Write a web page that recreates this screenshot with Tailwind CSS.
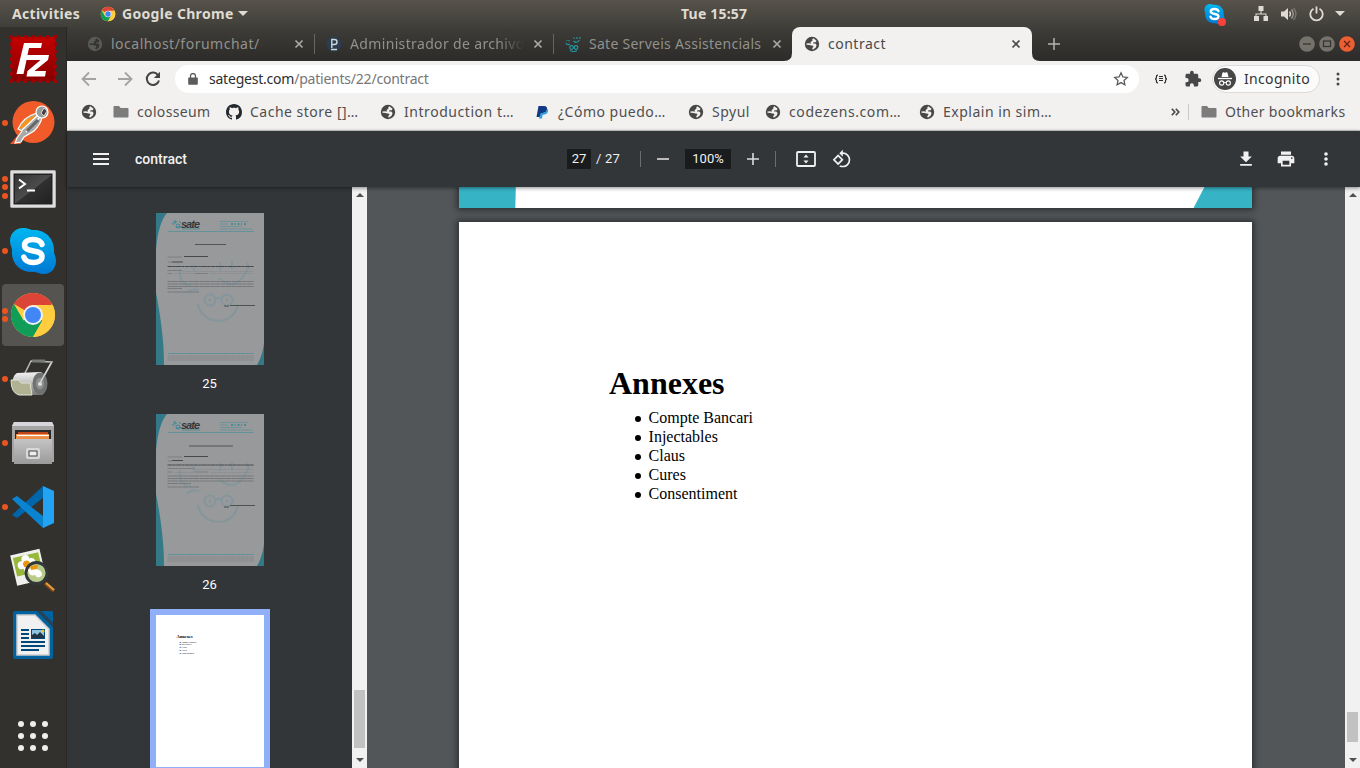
<!DOCTYPE html>
<html lang="en">
<head>
<meta charset="utf-8">
<title>contract</title>
<script src="https://cdn.jsdelivr.net/npm/@tailwindcss/browser@4"></script>
</head>
<body class="w-[1360px] h-[768px] overflow-hidden font-['Noto_Sans',sans-serif] text-[14px] whitespace-nowrap">
<svg class="absolute w-0 h-0">
  <defs>
    <linearGradient id="sk" x1="0" y1="0" x2="0" y2="1"><stop offset="0" stop-color="#00b7f0"/><stop offset="1" stop-color="#0078d4"/></linearGradient>
    <symbol id="globe" viewBox="0 0 16 16"><circle cx="8" cy="8" r="7.200" fill="#474747"/><path d="M9.300 2.300L12.600 4.800 11.700 6.200H9.500L9 7.400H11.300L12.600 9 11.800 11.500 9.200 13.500 8.300 13.300V12L9.300 11V9.800L7.200 9.600 5.800 8.900 2.500 8.800 2.400 7.400 5 7.300 6.800 7.800 6.600 6 8.400 4.800 8.300 3.200Z" fill="#f2f1f0"/></symbol>
    <symbol id="globe-dim" viewBox="0 0 16 16"><circle cx="8" cy="8" r="7.200" fill="#5a5a57"/><path d="M9.300 2.300L12.600 4.800 11.700 6.200H9.500L9 7.400H11.300L12.600 9 11.800 11.500 9.200 13.500 8.300 13.300V12L9.300 11V9.800L7.200 9.600 5.800 8.900 2.500 8.800 2.400 7.400 5 7.300 6.800 7.800 6.600 6 8.400 4.800 8.300 3.200Z" fill="#343431"/></symbol>
    <symbol id="close" viewBox="0 0 16 16"><path d="M4.500 4.500l7 7M11.500 4.500l-7 7" stroke="currentColor" stroke-width="1.700" fill="none"/></symbol>
    <symbol id="folder" viewBox="0 0 16 14"><path d="M1.500 1H6l1.700 2h6.800c.6 0 1 .4 1 1v7.500c0 .6-.4 1-1 1h-13c-.6 0-1-.4-1-1V2c0-.6.4-1 1-1z" fill="#7c7c7c"/></symbol>
    <symbol id="chrome" viewBox="0 0 48 48">
      <circle cx="24" cy="24" r="22" fill="#ffcd40"/>
      <path d="M24 24L4.950 13A22 22 0 0 1 43.050 13Z" fill="#db4437"/><path d="M24 13H43.050L24 24Z" fill="#db4437"/>
      <path d="M4.950 13A22 22 0 0 0 24 46L33.500 29.500 24 24 14.500 29.500Z" fill="#0f9d58"/>
      <path d="M43.050 13A22 22 0 0 1 24 46L33.500 29.500 24 24V14H43.500Z" fill="#ffcd40"/>
      <circle cx="24" cy="24" r="10" fill="#f1f1f1"/><circle cx="24" cy="24" r="8" fill="#4285f4"/>
    </symbol>
    <symbol id="skype" viewBox="0 0 48 48">
      <path d="M14 1C20 1 21 3 24 3C36 2 46 12 45 25C45 27 47 30 47 34C47 41 42 47 35 47C30 47 28 45 25 45C12 46 2 37 3 24C3 20 1 18 1 14C1 7 6 1 14 1Z" fill="url(#sk)"/>
      <path d="M33 17.500C31.500 13.500 28 12.500 24 12.500C19 12.500 15.500 14.500 15.500 18.300C15.500 26.500 33 21.500 33 29.500C33 33.500 29 35.500 24.500 35.500C19.500 35.500 16 33.800 14.800 30" stroke="#fff" stroke-width="5.500" stroke-linecap="round" fill="none"/>
    </symbol>
    <symbol id="thumb" viewBox="0 0 108 152">
      <path d="M0 0H108V152H0Z" fill="#98999b"/>
      <path d="M0 0H11C5 7 2 18 0 36Z" fill="#34798a"/><path d="M0 80C4 100 8 126 8 152H0Z" fill="#347a86"/><path d="M108 130C107 139 104 147 101 152H108Z" fill="#347a86"/>
      <g fill="none" stroke="#84969c" stroke-width="2"><circle cx="54" cy="87" r="5.500"/><circle cx="71" cy="87" r="5.500"/><path d="M59 86q3-2 7 0M42 91C46 113 78 114 82 91M31 79q9-5 12-1M24 56q-1 17 11 16M38 52v6M63 65q17 16 29-10M64 49v8M76 48v8M91 49l2 7"/></g>
      <circle cx="54" cy="87" r="1.500" fill="#84969c"/><circle cx="71" cy="87" r="1.500" fill="#84969c"/>
      <g fill="none" stroke="#398895" stroke-width="1"><circle cx="22" cy="13" r="2"/><circle cx="19" cy="9" r="1.200"/><path d="M16 10l2 2M23 8l2 2M20 14h5"/></g>
      <text x="25" y="14.500" font-family="Liberation Sans" font-size="11" font-style="italic" font-weight="bold" fill="#34383b" textLength="19">sate</text>
      <path d="M26 16H44" stroke="#478b95" stroke-width=".8"/>
      <path d="M64 8.500H92M64 11H72M64 13.500H86M64 16H97" stroke="#5f929b" stroke-width=".8" stroke-dasharray="7 .4 3 .4"/><path d="M75 11H91" stroke="#2f8593" stroke-width="1.300" stroke-dasharray="2 1.500 1 2"/>
      <path d="M12 18.500H98M12 140.500H98" stroke="#5c919a" stroke-width=".9"/>
      <path d="M11.500 143H98M11.500 145H98M11.500 147H98" stroke="#818487" stroke-width=".8" stroke-dasharray="3 .3 5 .4"/>
    </symbol>
  </defs>
</svg>

<div class="flex flex-col w-full h-full">
  <!-- Desktop top bar -->
  <header class="flex items-center h-[27px] shrink-0 bg-linear-to-b from-[#57534b] to-[#403f3a] text-[#dfdbd2] font-bold">
    <span class="ml-3 w-[88px] tracking-[.3px]">Activities</span>
    <svg class="w-4 h-4 mr-[6px]"><use href="#chrome"/></svg>
    <span class="w-[111px] tracking-[.32px]">Google Chrome</span>
    <svg class="ml-[5px] w-[10px] h-[5px]" viewBox="0 0 10 5"><path d="M0 0H10L5 5Z" fill="#dfdbd2"/></svg>
    <span class="ml-[433px] w-[66px] pb-px tracking-[.2px]">Tue 15:57</span>
    <div class="ml-auto flex items-center pr-[15px]">
      <div class="relative mr-[28px] w-[22px] h-[22px]"><svg class="w-[21px] h-[22px]" viewBox="0 0 48 48"><use href="#skype"/></svg><span class="absolute right-0 -bottom-px w-2 h-2 rounded-full bg-[#f9403a]"></span></div>
      <svg class="w-[14px] h-[15px] mr-[13px]" viewBox="0 0 14 15"><path d="M4.500 0h5v5h-5zM0 10h5v5H0zM9.500 10h4.500v5H9.500zM6.500 5h1v2.500h5V10h-1V8.500h-9V10h-1V7.500h5z" fill="#dfdbd2"/></svg>
      <svg class="w-[16px] h-[14px] mr-[12px]" viewBox="0 0 16 14"><path d="M0 4.500h3L7 1v12L3 9.500H0z" fill="#dfdbd2"/><path d="M8.500 4.500q2 2.500 0 5" stroke="#dfdbd2" stroke-width="1.300" fill="none"/><path d="M10.500 2.500q3.500 4.500 0 9" stroke="#a5a29b" stroke-width="1.300" fill="none"/><path d="M12.500 1q5 6 0 12" stroke="#7d7a73" stroke-width="1.300" fill="none"/></svg>
      <svg class="w-[15px] h-[16px] mr-[11px]" viewBox="0 0 15 16"><path d="M4.500 2.800a6.200 6.200 0 1 0 6 0M7.500 0.500v7" stroke="#dfdbd2" stroke-width="1.800" fill="none"/></svg>
      <svg class="w-[10px] h-[5px]" viewBox="0 0 10 5"><path d="M0 0H10L5 5Z" fill="#dfdbd2"/></svg>
    </div>
  </header>

  <div class="flex flex-1 min-h-0">
    <!-- Dock -->
    <nav class="flex flex-col w-[67px] shrink-0 bg-[#33312d] border-r border-[#2a2826]">
      <div class="flex items-center h-16"><span class="w-[9px]"></span>
        <svg class="w-12 h-12" viewBox="0 0 48 48"><linearGradient id="fz" x1="0" y1="0" x2="0" y2="1"><stop offset="0" stop-color="#c40000"/><stop offset="1" stop-color="#860000"/></linearGradient><path d="M2 2H46V46H2Z" fill="url(#fz)"/><path d="M2 2H46V46H2Z" fill="none" stroke="#a80000" stroke-width="4" stroke-linecap="round" stroke-dasharray="0.100 7.230"/><path d="M15 8H33L32 13H20L18.500 20H27L26 25H17.500L14.500 39H7.500ZM23 20H40L39 25 25.500 36H37L36 41.500H17.500L18.500 36 31.500 25H22Z" fill="#fff"/></svg>
      </div>
      <div class="flex items-center h-16"><span class="ml-[2px] mr-[2px] w-[6px] h-[6px] rounded-full bg-[#e95420]"></span>
        <svg class="w-[46px] h-[46px]" viewBox="0 0 46 46"><circle cx="23.500" cy="22" r="21" fill="#f15a29"/><path d="M0 44L8 35 11 44Z" fill="#e8512b"/><path d="M27 13Q13 17 8 29L12 31 7 38 5 43 11 42 14 37 24 31Q31 24 32 17Z" fill="#a9a9a7" stroke="#fff" stroke-width="1.200"/><path d="M26 15Q14 18 9 29L15 28Z" fill="#f7931e"/><path d="M30 17L16 32M28 15L12 30" stroke="#fff" stroke-width="1.200"/><path d="M28 20L17 31" stroke="#666" stroke-width="3"/><circle cx="32" cy="12" r="6" fill="#9b9b9a" stroke="#fff" stroke-width="1.200"/><path d="M34 8l3 3-3 5-3-3z" fill="#444" stroke="#fff" stroke-width=".7"/></svg>
      </div>
      <div class="flex items-center h-16"><span class="ml-[2px] mr-[2px] flex flex-col gap-[2.500px]"><i class="w-[6px] h-[6px] rounded-full bg-[#e95420]"></i><i class="w-[6px] h-[6px] rounded-full bg-[#e95420]"></i><i class="w-[6px] h-[6px] rounded-full bg-[#e95420]"></i></span>
        <svg class="w-[46px] h-[38px] mt-1" viewBox="0 0 46 38"><linearGradient id="tm" x1="0" y1="0" x2="1" y2="1"><stop offset="0" stop-color="#343434"/><stop offset=".5" stop-color="#4c4c4c"/><stop offset=".52" stop-color="#303030"/><stop offset="1" stop-color="#222"/></linearGradient><rect x=".5" y=".5" width="45" height="37" rx="1" fill="#dedede" stroke="#b0b0b0"/><rect x="3.500" y="3.500" width="39" height="31" fill="#222"/><rect x="5" y="5" width="36" height="28" fill="url(#tm)"/><path d="M9 9.500l6 4.500-6 4.500M17 20.500h8" stroke="#fff" stroke-width="2" fill="none"/></svg>
      </div>
      <div class="flex items-center h-16"><span class="ml-[2px] mr-[1px] w-[6px] h-[6px] rounded-full bg-[#e95420]"></span><svg class="w-12 h-12"><use href="#skype"/></svg></div>
      <div class="flex items-center h-16"><div class="flex items-center mx-[2px] w-[62px] h-[62px] rounded-[4px] bg-[#565450]"><span class="mr-[1px] flex flex-col gap-[2.500px]"><i class="w-[6px] h-[6px] rounded-full bg-[#e95420]"></i><i class="w-[6px] h-[6px] rounded-full bg-[#e95420]"></i></span><svg class="w-12 h-12"><use href="#chrome"/></svg></div></div>
      <div class="flex items-center h-16"><span class="ml-[2px] mr-[1px] w-[6px] h-[6px] rounded-full bg-[#e95420]"></span>
        <svg class="w-12 h-12" viewBox="0 0 48 48"><linearGradient id="rl" x1="0" y1="0" x2="0" y2="1"><stop offset="0" stop-color="#f2f2f2"/><stop offset=".35" stop-color="#cfcfcf"/><stop offset="1" stop-color="#777"/></linearGradient><path d="M15 20L22 6 43 7 33 25" fill="none" stroke="#b9bbb8" stroke-width="1.500"/><path d="M23 6h13" stroke="#777b77" stroke-width="3"/><path d="M8 18L31 17C38 18 41 35 33 40L10 40C1 36 2 21 8 18Z" fill="url(#rl)"/><ellipse cx="31" cy="28.500" rx="7.500" ry="11" fill="#6f7270"/><ellipse cx="31" cy="28.500" rx="4" ry="6" fill="#8d908e"/><circle cx="31" cy="29" r="2" fill="#ddd"/><path d="M31 28L42 8" stroke="#d5d5d5" stroke-width="1.500"/><path d="M2 25H10L12 28H21L23 40H10Q2 38 2 25Z" fill="#b0b293" stroke="#e2e3d2"/></svg>
      </div>
      <div class="flex items-center h-16"><span class="ml-[2px] mr-[3px] w-[6px] h-[6px] rounded-full bg-[#e95420]"></span>
        <svg class="w-[44px] h-[46px] -mt-px" viewBox="0 0 44 46"><linearGradient id="fl" x1="0" y1="0" x2="0" y2="1"><stop offset="0" stop-color="#c4c4c4"/><stop offset="1" stop-color="#9a9a9a"/></linearGradient><path d="M3 2H41L43 6V42H1V6Z" fill="#a5a5a5"/><path d="M3 2H41L43 6H1Z" fill="#d9d5dc"/><path d="M4 10H40V22H4Z" fill="#2b2b2b"/><path d="M7 12H37V21H7Z" fill="#c2461a"/><path d="M5 14H38V22H5Z" fill="#ee8d45"/><path d="M6 15.500H38" stroke="#fff" stroke-width="1.200"/><path d="M3 19H41V44H3Z" fill="url(#fl)"/><rect x="15" y="28" width="14" height="11" rx="2" fill="#d8d8d8"/><rect x="18" y="31" width="8" height="5" fill="#eee" stroke="#444"/></svg>
      </div>
      <div class="flex items-center h-16"><span class="ml-[2px] mr-[4px] w-[6px] h-[6px] rounded-full bg-[#e95420]"></span>
        <svg class="w-[42px] h-[42px]" viewBox="0 0 42 42"><path d="M0 29L31 0V12L5 32Z" fill="#0065a9"/><path d="M0 13L5 10 31 30V42Z" fill="#0a84d0"/><path d="M31 0L42 5V37L31 42Z" fill="#22a3f3"/></svg>
      </div>
      <div class="flex items-center h-16"><svg class="ml-[10px] w-[46px] h-[46px]" viewBox="0 0 46 46"><g transform="rotate(-13 17 18)"><rect x="3" y="4" width="30" height="31" fill="#f0f0ec"/><rect x="5" y="7" width="26" height="19" fill="#98b83c"/><g fill="#fff"><circle cx="12" cy="16" r="4"/><circle cx="22" cy="15" r="4"/><circle cx="17" cy="11" r="4"/><circle cx="17" cy="21" r="4"/></g><circle cx="17" cy="16" r="3.500" fill="#e8960e"/></g><circle cx="26.500" cy="25" r="10.500" fill="#b9cc8b" stroke="#33373a" stroke-width="2.800"/><path d="M18 22q4-4 8-1 6 1 6 6-4 5-7 0-6 2-7-5z" fill="#fff"/><path d="M20 18l8-1-1 4-6 1z" fill="#e8960e"/><path d="M35 35L44 43" stroke="#774815" stroke-width="4"/><path d="M36 35L44 42" stroke="#e79b4b" stroke-width="2"/></svg></div>
      <div class="flex items-center h-16"><svg class="ml-[13px] w-[40px] h-[48px]" viewBox="0 0 40 48"><path d="M2 0H24L40 16V46Q40 48 38 48H2Q0 48 0 46V2Q0 0 2 0Z" fill="#00629f"/><path d="M28 0H39Q40 0 40 1V12Z" fill="#00629f"/><path d="M24 0L40 16V12L28 0Z" fill="#25445a"/><path d="M4 4H22L36 18V44H4Z" fill="#f1f1f1" stroke="#ccc" stroke-width="1.500"/><path d="M8 19h8M8 23h8M8 27h8M8 31h24M8 35h24M8 39h18" stroke="#00487a" stroke-width="2"/><rect x="18" y="18" width="14" height="10" fill="#00487a"/><rect x="19" y="19" width="12" height="8" fill="#8dc4e2"/><path d="M19 27V24l3-2 2 2 3-3 4 4v2z" fill="#234"/><circle cx="30" cy="20" r="1.500" fill="#f3c93b"/></svg></div>
      <svg class="mt-auto mb-4 ml-[17px] w-8 h-8" viewBox="0 0 32 32" fill="#eeeeec"><circle cx="4" cy="4" r="3"/><circle cx="16" cy="4" r="3"/><circle cx="28" cy="4" r="3"/><circle cx="4" cy="16" r="3"/><circle cx="16" cy="16" r="3"/><circle cx="28" cy="16" r="3"/><circle cx="4" cy="28" r="3"/><circle cx="16" cy="28" r="3"/><circle cx="28" cy="28" r="3"/></svg>
    </nav>

    <!-- Browser window -->
    <main class="flex flex-col flex-1 min-w-0">
      <div class="flex h-[34px] shrink-0 pl-[9px] bg-linear-to-b from-[#3e3d39] to-[#2c2b29] text-[#92918d]">
        <div class="flex items-center w-[239px] pl-[11px] pr-[8px]"><svg class="w-4 h-4 mr-2"><use href="#globe-dim"/></svg><span class="pb-px tracking-[.5px]">localhost/forumchat/</span><svg class="w-4 h-4 ml-auto text-[#aaa9a5]"><use href="#close"/></svg></div>
        <div class="flex items-center w-[239px] pr-[8px]"><span class="w-px h-5 bg-[#666562] mr-[11px] -ml-px"></span><svg class="w-4 h-4 mr-2" viewBox="0 0 16 16"><circle cx="8" cy="8" r="7.500" fill="#2c3d50"/><path d="M5.800 12V3.500H8.500Q11 3.500 11 6T8.500 8.500H6M5 13.500h6" fill="none" stroke="#cfd6dc" stroke-width="1.400"/></svg><span class="w-[174px] pb-px tracking-[.35px] overflow-hidden mask-r-from-85%">Administrador de archivos</span><svg class="w-4 h-4 ml-auto text-[#aaa9a5]"><use href="#close"/></svg></div>
        <div class="flex items-center w-[239px] pr-[8px]"><span class="w-px h-5 bg-[#666562] mr-[11px] -ml-px"></span><svg class="w-4 h-4 mr-2" viewBox="0 0 16 16" fill="none" stroke="#2596a2" stroke-width="1.200"><circle cx="6.500" cy="11.500" r="1.800"/><circle cx="11" cy="11.500" r="1.800"/><path d="M5 14.500q3.500 2 7 0M8.500 5q3 3 6-1M9 1.500v1.500M12 1v2M15 1v2M1 7q1 2.500 4 1M1.500 4.500h1M4 4v1.500"/></svg><span class="pb-px tracking-[.27px]">Sate Serveis Assistencials</span><svg class="w-4 h-4 ml-auto text-[#aaa9a5]"><use href="#close"/></svg></div>
        <div class="relative flex items-center w-[240px] -ml-px pl-[12px] pr-[8px] rounded-t-[8px] bg-[#f2f1f0] text-[#4a4a4a]"><svg class="absolute -left-2 bottom-0 w-2 h-2" viewBox="0 0 8 8"><path d="M8 0V8H0Q8 8 8 0Z" fill="#f2f1f0"/></svg><svg class="absolute -right-2 bottom-0 w-2 h-2" viewBox="0 0 8 8"><path d="M0 0V8H8Q0 8 0 0Z" fill="#f2f1f0"/></svg><svg class="w-4 h-4 mr-2"><use href="#globe"/></svg><span class="pb-px tracking-[.5px]">contract</span><svg class="w-4 h-4 ml-auto text-[#4a4a4a]"><use href="#close"/></svg></div>
        <svg class="w-3 h-3 ml-[16px] mt-[11px]" viewBox="0 0 12 12"><path d="M6 0V12M0 6H12" stroke="#b5b4b0" stroke-width="1.500"/></svg>
        <div class="ml-auto flex items-center gap-1 pr-[5px]">
          <svg class="w-4 h-4" viewBox="0 0 16 16"><circle cx="8" cy="8" r="7.800" fill="#74726a"/><path d="M4 8h8" stroke="#33322e" stroke-width="1.200"/></svg>
          <svg class="w-4 h-4" viewBox="0 0 16 16"><circle cx="8" cy="8" r="7.800" fill="#74726a"/><rect x="4.500" y="5" width="7" height="5.500" fill="none" stroke="#33322e" stroke-width="1.200"/></svg>
          <svg class="w-4 h-4" viewBox="0 0 16 16"><circle cx="8" cy="8" r="7.800" fill="#ec5f32"/><path d="M5 5l6 6M11 5l-6 6" stroke="#5c2410" stroke-width="1.200"/></svg>
        </div>
      </div>

      <div class="flex items-center h-9 shrink-0 bg-[#f2f1f0] pl-[14px]">
        <svg class="w-4 h-4 mr-5" viewBox="0 0 16 16" fill="none" stroke="#a3a3a3" stroke-width="1.800"><path d="M15 8H2M8 1.500L1.500 8 8 14.500"/></svg>
        <svg class="w-4 h-4 mr-3" viewBox="0 0 16 16" fill="none" stroke="#a3a3a3" stroke-width="1.800"><path d="M1 8H14M8 1.500L14.500 8 8 14.500"/></svg>
        <svg class="w-4 h-4 mr-[14px]" viewBox="0 0 16 16"><path d="M13.300 4.500A6.200 6.200 0 1 0 14 9.500" fill="none" stroke="#454545" stroke-width="2"/><path d="M15 .8V7H8.800Z" fill="#454545"/></svg>
        <div class="flex items-center w-[964px] h-7 rounded-full bg-white pl-[13px] pr-[10px]">
          <svg class="w-[10px] h-3 mr-[11px]" viewBox="0 0 10 12"><path d="M1 4.500h8q.8 0 .8.800v5.700q0 .8-.8.800H1q-.8 0-.8-.8V5.300q0-.8.800-.8z" fill="#5c5c5c"/><path d="M2.500 5V3a2.500 2.500 0 0 1 5 0v2" fill="none" stroke="#5c5c5c" stroke-width="1.300"/></svg>
          <span class="pb-px tracking-[-.22px] text-[#767676]"><span class="text-[#2e2e2e]">sategest.com</span>/patients/22/contract</span>
          <svg class="w-4 h-4 ml-auto" viewBox="0 0 16 16"><path d="M8 1.800l1.900 4.100 4.400.5-3.300 3 .9 4.400L8 11.600l-3.900 2.200.9-4.400-3.300-3 4.400-.5z" fill="none" stroke="#5c5c5c" stroke-width="1.300"/></svg>
        </div>
        <svg class="w-[14px] h-[10px] ml-[15px]" viewBox="0 0 14 10" fill="none" stroke="#2b2b2b" stroke-width="1.200"><path d="M4 1.200Q2.500 1 2.500 2.500 2.500 5 1 5 2.500 5 2.500 7.500 2.500 9 4 8.800M10 1.200Q11.500 1 11.500 2.500 11.500 5 13 5 11.500 5 11.500 7.500 11.500 9 10 8.800"/><path d="M5 2.500H9M5 4.500H9M5 6.500H9" stroke-width="1"/></svg>
        <svg class="w-[18px] h-[18px] ml-[16px]" viewBox="0 0 24 24"><path d="M20.500 11H19V7c0-1.100-.9-2-2-2h-4V3.500a2.500 2.500 0 0 0-5 0V5H4c-1.100 0-2 .9-2 2v3.800h1.500a2.700 2.700 0 0 1 0 5.400H2V20c0 1.100.9 2 2 2h3.800v-1.500a2.700 2.700 0 0 1 5.400 0V22H17c1.100 0 2-.9 2-2v-4h1.500a2.500 2.500 0 0 0 0-5z" fill="#474747"/></svg>
        <div class="flex items-center w-[108px] h-7 ml-[10px] rounded-full bg-[#fbfbfb] border border-[#dcdbda] pl-px text-[#333]">
          <svg class="w-[22px] h-[22px] mr-[8px]" viewBox="0 0 22 22"><circle cx="11" cy="11" r="11" fill="#474747"/><path d="M7.500 9L8.500 4.800q.3-.8 1.100-.5L11 4.800l1.400-.5q.8-.3 1.100.5L14.500 9z" fill="#fff"/><path d="M4 10.500h14" stroke="#fff" stroke-width="1.300"/><circle cx="7.700" cy="15" r="2.100" fill="none" stroke="#fff" stroke-width="1.100"/><circle cx="14.300" cy="15" r="2.100" fill="none" stroke="#fff" stroke-width="1.100"/><path d="M9.800 14.700q1.200-.7 2.400 0" fill="none" stroke="#fff"/></svg>
          <span class="pb-px tracking-[.33px]">Incognito</span>
        </div>
        <svg class="w-1 h-4 ml-[16px]" viewBox="0 0 4 16" fill="#474747"><circle cx="2" cy="3" r="1.500"/><circle cx="2" cy="8" r="1.500"/><circle cx="2" cy="13" r="1.500"/></svg>
      </div>

      <div class="flex items-center h-[34px] shrink-0 bg-[#f2f1f0] border-b border-[#c9cbcb] pl-[14px] pb-[4px] text-[#4f4f4f] tracking-[.5px]">
        <svg class="w-4 h-4 mr-4"><use href="#globe"/></svg>
        <svg class="w-4 h-[14px] mr-2"><use href="#folder"/></svg><span class="w-[89px] tracking-[.35px]">colosseum</span>
        <svg class="w-4 h-4 mr-2" viewBox="0 0 16 16"><path d="M8 0C3.580 0 0 3.580 0 8c0 3.540 2.290 6.530 5.470 7.590.4.070.55-.17.55-.38 0-.19-.01-.82-.01-1.490-2.010.37-2.530-.49-2.690-.94-.09-.23-.48-.94-.82-1.130-.28-.15-.68-.52-.01-.53.63-.01 1.080.58 1.230.82.72 1.210 1.870.87 2.330.66.07-.52.28-.87.51-1.070-1.780-.2-3.640-.89-3.640-3.950 0-.87.31-1.590.82-2.150-.08-.2-.36-1.020.08-2.120 0 0 .67-.21 2.200.82.64-.18 1.320-.27 2-.27s1.360.09 2 .27c1.530-1.040 2.200-.82 2.200-.82.44 1.100.16 1.920.08 2.120.51.56.82 1.270.82 2.150 0 3.070-1.870 3.750-3.650 3.950.29.25.54.73.54 1.480 0 1.070-.01 1.930-.01 2.200 0 .21.15.46.55.38A8.010 8.010 0 0 0 16 8c0-4.420-3.580-8-8-8z" fill="#24292e"/></svg><span class="w-[130px]">Cache store []…</span>
        <svg class="w-4 h-4 mr-2"><use href="#globe"/></svg><span class="w-[130px] tracking-[.55px]">Introduction t…</span>
        <svg class="w-4 h-4 mr-2" viewBox="0 0 16 16"><path d="M4.500 2h5.500q3.500.3 3 3.500-.8 3.500-4.500 3.500H7l-.8 4H2.500z" fill="#123984"/><path d="M13.200 4.800q1.300 1 .8 2.800-.8 3-4.200 3.100H8.600L8 14.500H5L5.500 12l.7 0 .8-3h1.500q4 0 4.700-4.200z" fill="#2aa0e0"/></svg><span class="w-[130px]">¿Cómo puedo…</span>
        <svg class="w-4 h-4 mr-2"><use href="#globe"/></svg><span class="w-[53px]">Spyul</span>
        <svg class="w-4 h-4 mr-2"><use href="#globe"/></svg><span class="w-[130px] tracking-[.6px]">codezens.com…</span>
        <svg class="w-4 h-4 mr-2"><use href="#globe"/></svg><span class="w-[108px]">Explain in sim…</span>
        <svg class="w-[9px] h-2 ml-auto" viewBox="0 0 9 8" fill="none" stroke="#474747" stroke-width="1.600"><path d="M.8.8L3.800 4 .8 7.200M4.800.8L7.800 4 4.800 7.200"/></svg>
        <span class="w-px h-4 bg-[#c8c8c6] ml-2 mr-[12px]"></span>
        <svg class="w-4 h-[14px] mr-2"><use href="#folder"/></svg><span class="w-[135px] tracking-[.3px]">Other bookmarks</span>
      </div>

      <!-- PDF viewer -->
      <div class="relative z-10 flex items-center h-14 shrink-0 bg-[#323639] text-[#f1f1f1] font-[Roboto,sans-serif] text-[13px] pl-[26px] shadow-[0_1px_4px_rgba(0,0,0,0.450)]">
        <svg class="w-4 h-3 mr-[26px]" viewBox="0 0 16 12"><path d="M0 1H16M0 6H16M0 11H16" stroke="#f1f1f1" stroke-width="2"/></svg>
        <span class="w-[432px] text-[14px] font-medium">contract</span>
        <span class="flex items-center justify-center w-6 h-5 bg-[#191b1c]">27</span><span class="ml-[5px] w-[44px] tracking-[.2px]">/ 27</span>
        <span class="w-px h-4 bg-[#6b6e71] mr-4"></span>
        <svg class="w-3 h-3 mr-4" viewBox="0 0 12 12"><path d="M0 6H12" stroke="#dcdddd" stroke-width="1.600"/></svg>
        <span class="flex items-center justify-center w-[46px] h-5 bg-[#191b1c]">100%</span>
        <svg class="w-3 h-3 ml-4 mr-4" viewBox="0 0 12 12"><path d="M0 6H12M6 0V12" stroke="#dcdddd" stroke-width="1.600"/></svg>
        <span class="w-px h-4 bg-[#6b6e71] mr-5"></span>
        <svg class="w-5 h-4 mr-4" viewBox="0 0 20 16"><rect x="1" y="1" width="18" height="14" rx="1" fill="none" stroke="#f1f1f1" stroke-width="1.800"/><path d="M7.500 6.500L10 3.500l2.500 3zM7.500 9.500L10 12.500l2.500-3z" fill="#f1f1f1"/></svg>
        <svg class="w-5 h-5 -mt-px" viewBox="0 0 24 24"><path d="M7.340 6.410L.860 12.900l6.490 6.480 6.490-6.480-6.500-6.490zM3.690 12.900l3.660-3.660L11 12.900l-3.660 3.660-3.650-3.660zm15.670-6.260A8.950 8.950 0 0 0 13 4V.760L8.760 5 13 9.240V6c1.790 0 3.580.68 4.950 2.050a7.007 7.007 0 0 1 0 9.900 6.973 6.973 0 0 1-7.790 1.440l-1.490 1.490C10.020 21.620 11.510 22 13 22c2.300 0 4.610-.88 6.360-2.640a8.980 8.980 0 0 0 0-12.720z" fill="#f1f1f1"/></svg>
        <svg class="w-5 h-5 ml-auto mr-[20px]" viewBox="0 0 24 24"><path d="M19 9h-4V3H9v6H5l7 7 7-7zM5 18v2h14v-2H5z" fill="#f1f1f1"/></svg>
        <svg class="w-5 h-5 mr-[22px]" viewBox="0 0 24 24"><path d="M19 8H5c-1.660 0-3 1.340-3 3v6h4v4h12v-4h4v-6c0-1.660-1.340-3-3-3zm-3 11H8v-5h8v5zm3-7c-.55 0-1-.45-1-1s.45-1 1-1 1 .45 1 1-.45 1-1 1zm-1-9H6v4h12V3z" fill="#f1f1f1"/></svg>
        <svg class="w-4 h-4 mr-[26px]" viewBox="0 0 16 16" fill="#f1f1f1"><circle cx="8" cy="3" r="1.800"/><circle cx="8" cy="8" r="1.800"/><circle cx="8" cy="13" r="1.800"/></svg>
      </div>

      <div class="flex flex-1 min-h-0">
        <aside class="flex flex-col items-center w-[285px] shrink-0 bg-[#323639] pt-[26px] text-white font-[Roboto,sans-serif] text-[13px] overflow-hidden">
          <svg class="w-[108px] h-[152px] shrink-0" viewBox="0 0 108 152"><use href="#thumb"/>
            <path d="M39 31.500H70" stroke="#515456" stroke-width="1"/><path d="M11.500 44H26M12 49H16" stroke="#77797b" stroke-width=".8"/><path d="M28 43.500H52M16 49H27" stroke="#46494b" stroke-width="1"/><path d="M11.500 53.500H98" stroke="#46494b" stroke-width="1" stroke-dasharray="5 .3 3 .3"/><path d="M11.500 57.500H26M11.500 60.500H16M39 60.500H52" stroke="#707375" stroke-width=".7"/><path d="M26 58.500H97M18 60.500H38M54 60.500H97" stroke="#808385" stroke-width=".4"/><path d="M11.500 68.500H98M11.500 71H98M11.500 73.500H98M11.500 75.500H26M11.500 79H43" stroke="#6d7072" stroke-width=".8" stroke-dasharray="4 .3 6 .4"/><path d="M68 93H73M74 92.500H99" stroke="#46494b" stroke-width=".9"/></svg>
          <span class="mt-[9px] h-5 leading-5">25</span>
          <svg class="mt-5 w-[108px] h-[152px] shrink-0" viewBox="0 0 108 152"><use href="#thumb"/>
            <path d="M33 32H77" stroke="#515456" stroke-width="1"/><path d="M11.500 43H26M12 47H16" stroke="#77797b" stroke-width=".8"/><path d="M28 42.500H52M16 46.500H27" stroke="#46494b" stroke-width="1"/><path d="M11.500 51H98" stroke="#46494b" stroke-width="1" stroke-dasharray="5 .3 3 .3"/><path d="M11.500 54.500H38M11.500 58H16M39 58H52" stroke="#707375" stroke-width=".7"/><path d="M38 55.500H97M18 58.500H38M54 58.500H97" stroke="#808385" stroke-width=".4"/><path d="M11.500 62H98M11.500 64.500H98M11.500 67H98M11.500 69.500H35M11.500 73H43" stroke="#6d7072" stroke-width=".8" stroke-dasharray="4 .3 6 .4"/><path d="M68 93H73M74 91.500H99" stroke="#46494b" stroke-width=".9"/></svg>
          <span class="mt-[9px] h-5 leading-5">26</span>
          <div class="mt-[14px] w-[120px] h-[164px] shrink-0 border-[6px] border-[#8fb0f8] bg-white pt-[19px] pl-[21px] font-['Liberation_Serif',serif] text-black">
            <h2 class="text-[4.500px] leading-[5px] font-bold">Annexes</h2>
            <ul class="pl-[3px] mt-[1.500px] text-[2.300px] leading-[2.750px]"><li>● Compte Bancari</li><li>● Injectables</li><li>● Claus</li><li>● Cures</li><li>● Consentiment</li></ul>
          </div>
        </aside>
        <div class="flex flex-col items-center w-[15px] shrink-0 bg-[#f1f1f1] pt-[6px]">
          <svg class="w-2 h-1" viewBox="0 0 8 4"><path d="M0 4L4 0 8 4Z" fill="#505050"/></svg><div class="mt-[493px] w-[11px] h-[58px] bg-[#c1c1c1]"></div><svg class="mt-[10px] w-2 h-1" viewBox="0 0 8 4"><path d="M0 0L4 4 8 0Z" fill="#505050"/></svg>
        </div>
        <section class="flex flex-col flex-1 min-w-0 pl-[92px] bg-[#525659] overflow-hidden">
          <svg class="w-[793px] h-[21px] shrink-0 shadow-[0_0_6px_2px_rgba(0,0,0,0.450)]" viewBox="0 0 793 21"><path d="M0 0H793V21H0Z" fill="#fff"/><path d="M0 0H56.800L56.300 21H0ZM745.500 0H793V21H734.500Z" fill="#37b3c6"/></svg>
          <article class="mt-[14px] w-[793px] h-[700px] shrink-0 bg-white shadow-[0_0_6px_2px_rgba(0,0,0,0.450)] pt-[143px] pl-[150px] font-['Liberation_Serif',serif] text-black">
            <h1 class="text-[32px] leading-[37px] font-bold">Annexes</h1>
            <ul class="mt-[6px] pl-[25.600px] text-base leading-[19px]">
              <li class="flex items-center gap-2"><i class="w-[6px] h-[6px] mt-[2px] rounded-full bg-black"></i>Compte Bancari</li>
              <li class="flex items-center gap-2"><i class="w-[6px] h-[6px] mt-[2px] rounded-full bg-black"></i>Injectables</li>
              <li class="flex items-center gap-2"><i class="w-[6px] h-[6px] mt-[2px] rounded-full bg-black"></i>Claus</li>
              <li class="flex items-center gap-2"><i class="w-[6px] h-[6px] mt-[2px] rounded-full bg-black"></i>Cures</li>
              <li class="flex items-center gap-2"><i class="w-[6px] h-[6px] mt-[2px] rounded-full bg-black"></i>Consentiment</li>
            </ul>
          </article>
        </section>
        <div class="flex flex-col items-center w-[15px] shrink-0 bg-[#f1f1f1] pt-[6px]">
          <svg class="w-2 h-1" viewBox="0 0 8 4"><path d="M0 4L4 0 8 4Z" fill="#505050"/></svg><div class="mt-[515px] w-[11px] h-[30px] bg-[#c1c1c1]"></div><svg class="mt-4 w-2 h-1" viewBox="0 0 8 4"><path d="M0 0L4 4 8 0Z" fill="#505050"/></svg>
        </div>
      </div>
    </main>
  </div>
</div>
</body>
</html>
